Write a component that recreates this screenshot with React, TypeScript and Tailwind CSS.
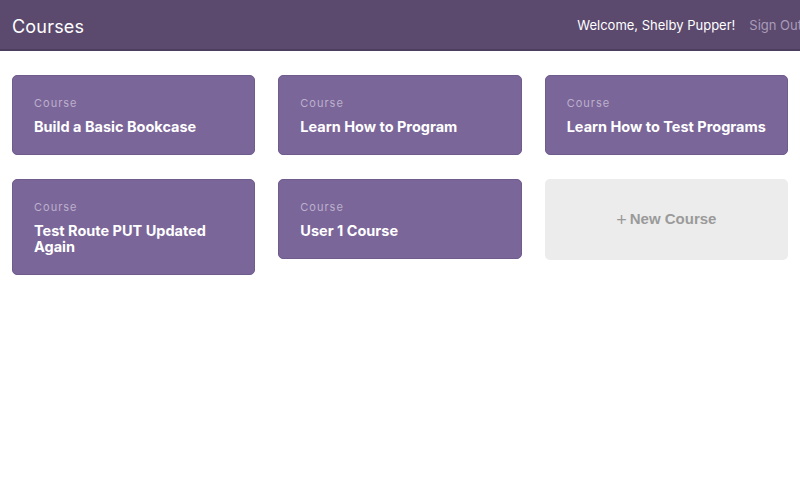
const COURSES = [
  { id: 1, title: "Build a Basic Bookcase" },
  { id: 2, title: "Learn How to Program" },
  { id: 3, title: "Learn How to Test Programs" },
  { id: 4, title: "Test Route PUT Updated Again" },
  { id: 5, title: "User 1 Course" },
]

const App = () => {
  return (
    <div className="min-h-[503px] w-full bg-white font-['Inter',sans-serif] overflow-hidden">
      <header className="h-[51px] w-full bg-[#5b4a6e] border-b-2 border-[#4d3e5f] flex items-center justify-between pl-3 pt-[3px] overflow-hidden">
        <h1 className="text-[18px] text-white tracking-[0.2px]">Courses</h1>
        <nav className="flex items-center gap-[14px] text-[13px] shrink-0 mr-[-2px]">
          <span className="text-white">Welcome, Shelby Pupper!</span>
          <a className="text-[#a99bb9]">Sign Out</a>
        </nav>
      </header>
      <main className="grid grid-cols-3 gap-x-[23px] gap-y-[24px] px-3 pt-[24px] items-start">
        {COURSES.map(({ id, title }) => (
          <a key={id} className="block bg-[#7b6699] border border-[#6f5b8c] rounded-[5px] pl-[21px] pr-2 pt-[20px] pb-[19px]">
            <p className="text-[11px] text-[#bcb0cd] tracking-[1px] leading-[14px]">Course</p>
            <h3 className="mt-[9px] text-[14.5px] font-bold text-white leading-[16px]">{title}</h3>
          </a>
        ))}
        <a className="h-[81px] bg-[#ececec] rounded-[5px] flex items-center justify-center font-['Liberation_Sans',Arial,sans-serif] text-[15px] font-bold text-[#9a9a9a]">
          <span className="font-normal text-[18px] mr-[3px] leading-none">+</span>New Course
        </a>
      </main>
    </div>
  )
}

export default App
